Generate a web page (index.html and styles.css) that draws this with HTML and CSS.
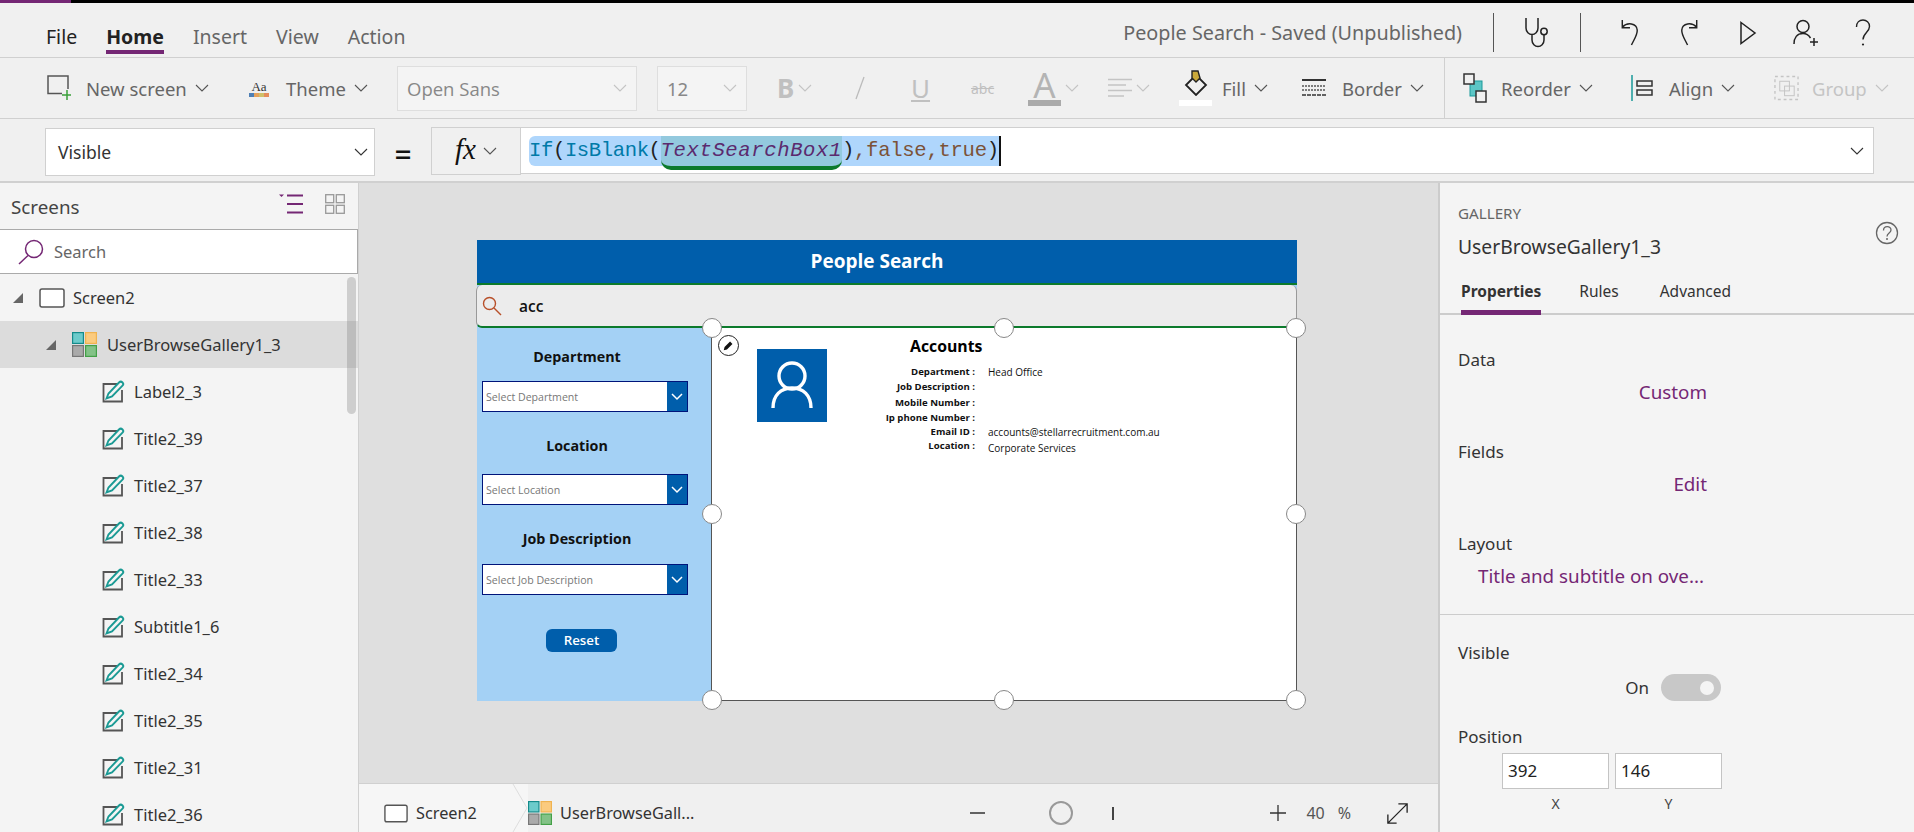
FILE: index.html
```html
<!DOCTYPE html>
<html lang="en">
<head>
<meta charset="utf-8">
<title>People Search</title>
<link rel="stylesheet" href="styles.css">
</head>
<body>
<svg class="defs" aria-hidden="true">
  <symbol id="caret" viewBox="0 0 14 8"><path d="M1 1l6 6 6-6" fill="none" stroke="currentColor" stroke-width="1.1"/></symbol>
  <symbol id="pencilbox" viewBox="0 0 23 23">
    <path d="M15 4H1.500v17.500H20V10" fill="none" stroke="#555" stroke-width="1.800"/>
    <path d="M4.500 18.500l2-5L17 2.500c1-1 2.500-1 3.500 0s1 2.200 0 3.200L10 16.500z" fill="#f4f4f4" stroke="#1a9a94" stroke-width="1.900"/>
  </symbol>
  <symbol id="gallery" viewBox="0 0 25 25">
    <rect x=".6" y=".6" width="10.800" height="10.800" fill="#6ccbcb" stroke="#148b8b" stroke-width="1.200"/>
    <rect x="13.600" y=".6" width="10.800" height="10.800" fill="#fbcb7f" stroke="#f0b350" stroke-width="1.200"/>
    <rect x=".6" y="13.600" width="10.800" height="10.800" fill="#aaa" stroke="#777" stroke-width="1.200"/>
    <rect x="13.600" y="13.600" width="10.800" height="10.800" fill="#83c287" stroke="#43a047" stroke-width="1.200"/>
  </symbol>
  <symbol id="screenbox" viewBox="0 0 26 20"><rect x="1" y="1" width="24" height="18" rx="2" fill="#fff" stroke="#555" stroke-width="1.500"/></symbol>
  <symbol id="tri" viewBox="0 0 10 10"><path d="M10 0v10H0z" fill="#666"/></symbol>
  <symbol id="ddchev" viewBox="0 0 12 8"><path d="M1 1l5 5 5-5" fill="none" stroke="#fff" stroke-width="1.500"/></symbol>
</svg>

<div class="topstrip"><div class="topstrip-accent"></div></div>

<header class="menubar">
  <nav class="menutabs">
    <span class="menutab menutab-file">File</span>
    <span class="menutab menutab-active">Home</span>
    <span class="menutab">Insert</span>
    <span class="menutab">View</span>
    <span class="menutab">Action</span>
  </nav>
  <div class="appstatus">
    <span class="apptitle">People Search - Saved (Unpublished)</span>
    <span class="vsep vsep-a"></span>
    <svg class="ico steth" viewBox="0 0 26 30"><path d="M2 0v10c0 4 3 6.500 6 6.500s6-2.500 6-6.500V0M8 16.500V22c0 4 3 6.500 6 6.500s6-2.500 6-6.500v-5" fill="none" stroke="#222" stroke-width="1.500"/><circle cx="20" cy="13.500" r="3.200" fill="none" stroke="#222" stroke-width="1.500"/></svg>
    <span class="vsep vsep-b"></span>
    <svg class="ico undo" viewBox="0 0 20 28"><path d="M2 1v8h8M2 8.500C7 3 17 4 17.500 11.500c.3 5-3.500 10-6 15.500" fill="none" stroke="#222" stroke-width="1.500"/></svg>
    <svg class="ico redo" viewBox="0 0 20 28"><path d="M18 1v8h-8M18 8.500C13 3 3 4 2.500 11.500c-.3 5 3.500 10 6 15.500" fill="none" stroke="#222" stroke-width="1.500"/></svg>
    <svg class="ico play" viewBox="0 0 18 24"><path d="M2 1.500L16 12 2 22.500z" fill="none" stroke="#222" stroke-width="1.500"/></svg>
    <svg class="ico padd" viewBox="0 0 26 28"><circle cx="10" cy="7.500" r="6" fill="none" stroke="#222" stroke-width="1.500"/><path d="M1 25c0-6 3-10.500 9-10.500 3.500 0 6 2 7.500 4.500M21 19v8M17 23h8" fill="none" stroke="#222" stroke-width="1.500"/></svg>
    <svg class="ico help" viewBox="0 0 16 28"><path d="M1.500 8C1.500 3.500 4.500 1 8 1s6.500 2.500 6.500 6.500c0 5.500-6.500 6.500-6.500 13" fill="none" stroke="#222" stroke-width="1.400"/><circle cx="8" cy="25.500" r="1.100" fill="#222"/></svg>
  </div>
</header>

<section class="toolbar">
  <div class="tool t-new">
    <svg class="ico ico-new" viewBox="0 0 24 26"><path d="M15 18.500H1V1h20v13" fill="none" stroke="#555" stroke-width="1.500"/><path d="M20 15v10M15 20h10" stroke="#3aa03a" stroke-width="1.500"/></svg>
    <span>New screen</span><svg class="caret"><use href="#caret"/></svg>
  </div>
  <div class="tool t-theme">
    <span class="themeicon"><span class="themeaa">Aa</span><span class="themebar"></span></span>
    <span>Theme</span><svg class="caret"><use href="#caret"/></svg>
  </div>
  <div class="selectbox sb-font"><span>Open Sans</span><svg class="caret caret-pale"><use href="#caret"/></svg></div>
  <div class="selectbox sb-size"><span>12</span><svg class="caret caret-pale"><use href="#caret"/></svg></div>
  <div class="fmt f-b"><b>B</b><svg class="caret caret-pale"><use href="#caret"/></svg></div>
  <div class="fmt f-i"><svg class="ico" viewBox="0 0 12 24" width="12" height="24"><path d="M10 1L2 23" stroke="#bbb" stroke-width="1.300"/></svg></div>
  <div class="fmt f-u"><u>U</u></div>
  <div class="fmt f-s"><s>abc</s></div>
  <div class="fmt f-a"><span class="colorA">A<span class="swatch swatch-grey"></span></span><svg class="caret caret-pale"><use href="#caret"/></svg></div>
  <div class="fmt f-al">
    <svg class="ico" viewBox="0 0 24 20" width="24" height="20"><path d="M0 1.500h24M0 7h18M0 12.500h24M0 18h16" stroke="#c4c4c4" stroke-width="1.400"/></svg>
    <svg class="caret caret-pale"><use href="#caret"/></svg>
  </div>
  <div class="tool t-fill">
    <span class="fillicon">
      <svg class="ico" viewBox="0 0 24 26" width="24" height="26"><path d="M12 5L2 15l10 10 10-10z" fill="#f0f0f0" stroke="#222" stroke-width="1.800"/><path d="M8 1h6l2 7-4 4-4-4z" fill="#caa93a" stroke="#222" stroke-width="1.400"/></svg>
      <span class="swatch swatch-white"></span>
    </span>
    <span>Fill</span><svg class="caret"><use href="#caret"/></svg>
  </div>
  <div class="tool t-border">
    <svg class="ico ico-bd" viewBox="0 0 24 18"><path d="M0 1h24" stroke="#333" stroke-width="2"/><path d="M0 7h24M0 11h24" stroke="#555" stroke-width="1.500" stroke-dasharray="2 1"/><path d="M0 16h24" stroke="#333" stroke-width="1.500" stroke-dasharray="4 1"/></svg>
    <span>Border</span><svg class="caret"><use href="#caret"/></svg>
  </div>
  <span class="toolsep"></span>
  <div class="tool t-reorder">
    <svg class="ico ico-ro" viewBox="0 0 24 30"><rect x="7" y="8" width="12" height="15" fill="#5cc6c6" stroke="#1a9a9a"/><rect x="1" y="1" width="10" height="10" fill="#f0f0f0" stroke="#333" stroke-width="1.500"/><rect x="13" y="18" width="10" height="11" fill="#f0f0f0" stroke="#333" stroke-width="1.500"/></svg>
    <span>Reorder</span><svg class="caret"><use href="#caret"/></svg>
  </div>
  <div class="tool t-align">
    <svg class="ico ico-al" viewBox="0 0 24 26"><path d="M1 0v26" stroke="#1a9a9a" stroke-width="1.500"/><rect x="6" y="6" width="15" height="5" fill="none" stroke="#333" stroke-width="1.500"/><rect x="6" y="15" width="15" height="5" fill="none" stroke="#333" stroke-width="1.500"/></svg>
    <span>Align</span><svg class="caret"><use href="#caret"/></svg>
  </div>
  <div class="tool t-group is-off">
    <svg class="ico ico-gr" viewBox="0 0 26 26"><rect x="1" y="1" width="24" height="24" fill="none" stroke="#c4c4c4" stroke-width="1.400" stroke-dasharray="3 3"/><rect x="6" y="6" width="10" height="10" fill="none" stroke="#c4c4c4"/><rect x="11" y="11" width="10" height="10" fill="none" stroke="#c4c4c4"/></svg>
    <span>Group</span><svg class="caret caret-pale"><use href="#caret"/></svg>
  </div>
</section>

<section class="formulabar">
  <div class="propselect"><span>Visible</span><svg class="caret caret-dark"><use href="#caret"/></svg></div>
  <span class="equals">=</span>
  <div class="fxbox"><i class="fx">fx</i><svg class="caret"><use href="#caret"/></svg></div>
  <div class="formula">
    <code class="sel"><span class="tk-head"><span class="tk-fn">If</span><span class="tk-p">(</span><span class="tk-fn">IsBlank</span><span class="tk-p">(</span></span><span class="tk-ref">TextSearchBox1</span><span class="tk-tail"><span class="tk-p">)</span><span class="tk-lit">,false,true</span><span class="tk-p">)</span></span></code>
    <svg class="caret caret-dark formula-caret"><use href="#caret"/></svg>
  </div>
</section>

<main class="workspace">
  <aside class="tree">
    <div class="treehead">
      <span class="treetitle">Screens</span>
      <svg class="ico ico-list" viewBox="0 0 24 20"><path d="M0 .500h5L2.500 3z" fill="#742774"/><path d="M8 1.500h16M8 10h16M8 18.500h16" stroke="#742774" stroke-width="1.800"/></svg>
      <svg class="ico ico-grid" viewBox="0 0 20 20"><g fill="none" stroke="#999" stroke-width="1.300"><rect x=".7" y=".7" width="8" height="8"/><rect x="11.300" y=".7" width="8" height="8"/><rect x=".7" y="11.300" width="8" height="8"/><rect x="11.300" y="11.300" width="8" height="8"/></g></svg>
    </div>
    <div class="treesearch">
      <svg class="ico ico-search" viewBox="0 0 26 26"><circle cx="16" cy="10" r="8.500" fill="none" stroke="#742774" stroke-width="1.500"/><path d="M10 16.500L1 25" stroke="#742774" stroke-width="1.500"/></svg>
      <span>Search</span>
    </div>
    <div class="treelist">
      <div class="row row-l0"><svg class="tri"><use href="#tri"/></svg><svg class="ico ico-screen"><use href="#screenbox"/></svg><span>Screen2</span></div>
      <div class="row row-l1 row-sel"><svg class="tri"><use href="#tri"/></svg><svg class="ico ico-gal"><use href="#gallery"/></svg><span>UserBrowseGallery1_3</span></div>
      <div class="row row-l2"><svg class="ico ico-pen"><use href="#pencilbox"/></svg><span>Label2_3</span></div>
      <div class="row row-l2"><svg class="ico ico-pen"><use href="#pencilbox"/></svg><span>Title2_39</span></div>
      <div class="row row-l2"><svg class="ico ico-pen"><use href="#pencilbox"/></svg><span>Title2_37</span></div>
      <div class="row row-l2"><svg class="ico ico-pen"><use href="#pencilbox"/></svg><span>Title2_38</span></div>
      <div class="row row-l2"><svg class="ico ico-pen"><use href="#pencilbox"/></svg><span>Title2_33</span></div>
      <div class="row row-l2"><svg class="ico ico-pen"><use href="#pencilbox"/></svg><span>Subtitle1_6</span></div>
      <div class="row row-l2"><svg class="ico ico-pen"><use href="#pencilbox"/></svg><span>Title2_34</span></div>
      <div class="row row-l2"><svg class="ico ico-pen"><use href="#pencilbox"/></svg><span>Title2_35</span></div>
      <div class="row row-l2"><svg class="ico ico-pen"><use href="#pencilbox"/></svg><span>Title2_31</span></div>
      <div class="row row-l2"><svg class="ico ico-pen"><use href="#pencilbox"/></svg><span>Title2_36</span></div>
      <div class="treescroll"></div>
    </div>
  </aside>

  <div class="center">
    <div class="stage">
      <div class="app">
        <div class="app-header">People Search</div>
        <div class="app-search">
          <svg class="ico ico-appsearch" viewBox="0 0 20 20"><circle cx="7.500" cy="7.500" r="6" fill="none" stroke="#b8502a" stroke-width="1.400"/><path d="M12 12l7 7" stroke="#b8502a" stroke-width="1.400"/></svg>
          <span>acc</span>
        </div>
        <div class="app-body">
          <div class="filters">
            <div class="flabel">Department</div>
            <div class="dd dd-1"><span>Select Department</span><i class="ddbtn"><svg><use href="#ddchev"/></svg></i></div>
            <div class="flabel">Location</div>
            <div class="dd dd-2"><span>Select Location</span><i class="ddbtn"><svg><use href="#ddchev"/></svg></i></div>
            <div class="flabel">Job Description</div>
            <div class="dd dd-3"><span>Select Job Description</span><i class="ddbtn"><svg><use href="#ddchev"/></svg></i></div>
            <div class="resetbtn">Reset</div>
          </div>
          <div class="results">
            <div class="avatar"><svg viewBox="0 0 70 73"><circle cx="35" cy="27" r="13" fill="none" stroke="#fff" stroke-width="3.400"/><path d="M16 59c0-13 8-20 19-20s19 7 19 20" fill="none" stroke="#fff" stroke-width="3.400"/></svg></div>
            <div class="person">
              <div class="personname">Accounts</div>
              <dl class="facts">
                <dt>Department :</dt><dd>Head Office</dd>
                <dt>Job Description :</dt><dd></dd>
                <dt>Mobile Number :</dt><dd></dd>
                <dt>Ip phone Number :</dt><dd></dd>
                <dt>Email ID :</dt><dd>accounts@stellarrecruitment.com.au</dd>
                <dt>Location :</dt><dd>Corporate Services</dd>
              </dl>
            </div>
            <span class="editbadge"><svg viewBox="0 0 14 14"><path d="M1 13l1-4 7-7 3 3-7 7z" fill="#111"/></svg></span>
            <span class="handle h-tl"></span><span class="handle h-tc"></span><span class="handle h-tr"></span>
            <span class="handle h-ml"></span><span class="handle h-mr"></span>
            <span class="handle h-bl"></span><span class="handle h-bc"></span><span class="handle h-br"></span>
          </div>
        </div>
      </div>
    </div>
    <footer class="statusbar">
      <div class="crumb crumb-a"><svg class="ico ico-crumbscreen"><use href="#screenbox"/></svg><span>Screen2</span><svg class="crumbarrow" viewBox="0 0 16 48"><path d="M1 0l14 24L1 48" fill="none" stroke="#ddd"/></svg></div>
      <div class="crumb crumb-b"><svg class="ico ico-gal"><use href="#gallery"/></svg><span>UserBrowseGall...</span></div>
      <div class="zoomctl">
        <svg class="zm-minus" viewBox="0 0 15 2"><path d="M0 1h15" stroke="#333" stroke-width="1.500"/></svg>
        <span class="zm-thumb"></span>
        <span class="zm-tick"></span>
        <svg class="zm-plus" viewBox="0 0 16 16"><path d="M0 8h16M8 0v16" stroke="#333" stroke-width="1.300"/></svg>
        <span class="zm-val">40</span><span class="zm-pct">%</span>
        <svg class="zm-expand" viewBox="0 0 24 24"><path d="M1 23L23 1M13 1h10v10M1 13v10h10" fill="none" stroke="#222" stroke-width="1.500"/></svg>
      </div>
    </footer>
  </div>

  <aside class="props">
    <div class="propshead">
      <div class="propskind">GALLERY</div>
      <div class="propsname">UserBrowseGallery1_3</div>
      <svg class="ico ico-help" viewBox="0 0 24 24"><circle cx="12" cy="12" r="10.500" fill="none" stroke="#666" stroke-width="1.300"/><path d="M8.500 9.500c0-5 7.500-5 7.500-.5 0 3-4 3-4 6.500" fill="none" stroke="#666" stroke-width="1.300"/><circle cx="12" cy="18" r="1" fill="#666"/></svg>
    </div>
    <div class="propstabs">
      <span class="ptab ptab-active">Properties</span>
      <span class="ptab ptab-rules">Rules</span>
      <span class="ptab ptab-adv">Advanced</span>
    </div>
    <div class="propsec propsec-a">
      <div class="plabel">Data</div>
      <div class="pvalue">Custom</div>
      <div class="plabel">Fields</div>
      <div class="pvalue">Edit</div>
      <div class="plabel">Layout</div>
      <div class="pvalue pvalue-trunc">Title and subtitle on ove...</div>
    </div>
    <div class="propsec propsec-b">
      <div class="plabel">Visible</div>
      <div class="toggleline"><span>On</span><span class="toggle"><i class="knob"></i></span></div>
      <div class="plabel plabel-pos">Position</div>
      <div class="xyinputs">
        <div class="xy"><div class="xybox">392</div><div class="xycap">X</div></div>
        <div class="xy"><div class="xybox">146</div><div class="xycap">Y</div></div>
      </div>
    </div>
  </aside>
</main>
</body>
</html>
```
FILE: styles.css
```css
* { box-sizing: border-box; }
html, body { margin: 0; height: 100%; }
body {
  width: 1914px; height: 832px; overflow: hidden;
  display: flex; flex-direction: column;
  background: #f0f0f0; color: #333;
  font-family: "Noto Sans", "Open Sans", sans-serif; font-size: 17px;
}
.defs { position: absolute; width: 0; height: 0; }
.ico { display: block; flex: none; }
.caret { width: 14px; height: 8px; flex: none; color: #555; display: block; }
.caret-pale { color: #c4c4c4; }
.caret-dark { color: #333; }

.topstrip { height: 3px; background: #000; flex: none; }
.topstrip-accent { width: 71px; height: 3px; background: #742774; }

/* menu bar */
.menubar { height: 55px; flex: none; display: flex; border-bottom: 1px solid #d0d0d0; position: relative; }
.menutabs { display: flex; padding-left: 46px; height: 100%; }
.menutab { height: 51px; padding-top: 20px; line-height: 28px; margin-right: 29px; color: #666; font-size: 19.500px; }
.menutab-file { color: #222; }
.menutab-active { color: #222; font-weight: 700; border-bottom: 4px solid #742774; }
.appstatus { margin-left: auto; display: flex; align-items: center; height: 47px; margin-top: 6px; padding-right: 43px; }
.apptitle { color: #666; font-size: 19.800px; margin-right: 31px; white-space: nowrap; }
.vsep { width: 1px; height: 39px; background: #555; }
.steth { width: 26px; height: 30px; margin-left: 30px; margin-right: 30px; }
.undo, .redo { width: 20px; height: 27px; }
.undo { margin-left: 39px; }
.redo { margin-left: 39px; }
.play { width: 18px; height: 24px; margin-left: 40px; }
.padd { width: 26px; height: 28px; margin-left: 36px; }
.help { width: 16px; height: 28px; margin-left: 36px; }

/* toolbar */
.toolbar { height: 61px; flex: none; display: flex; align-items: center; padding-left: 47px; border-bottom: 1px solid #d0d0d0; font-size: 18.500px; color: #666; }
.tool { display: flex; align-items: center; height: 100%; flex: none; }
.tool .caret { margin-left: 8px; }
.t-new { width: 201px; }
.ico-new { width: 24px; height: 26px; margin-right: 15px; }
.t-theme { width: 149px; }
.themeicon { width: 22px; margin-right: 16px; display: flex; flex-direction: column; align-items: center; }
.themeaa { font-family: "Liberation Serif", serif; font-size: 13px; line-height: 13px; color: #333; }
.themebar { width: 20px; height: 4px; background: linear-gradient(90deg, #4f7fb5 0 25%, #e5a15c 25% 50%, #d0c06a 50% 75%, #e58c5c 75%); }
.selectbox { height: 45px; border: 1px solid #dedede; background: #f4f4f4; display: flex; align-items: center; justify-content: space-between; padding: 0 9px; color: #888; flex: none; }
.sb-font { width: 240px; font-family: "Open Sans", sans-serif; font-size: 18.500px; }
.sb-size { width: 90px; margin-left: 20px; font-size: 18.500px; }
.fmt { flex: none; display: flex; align-items: center; height: 100%; color: #c0c0c0; }
.fmt .caret { margin-left: 4px; }
.f-b { margin-left: 30px; width: 65px; font-size: 26px; }
.f-i { width: 60px; padding-left: 12px; }
.f-u { width: 60px; font-size: 26px; padding-left: 9px; }
.f-s { width: 66px; font-size: 14px; padding-left: 9px; }
.f-a { width: 80px; position: relative; }
.colorA { font-size: 35px; line-height: 30px; font-weight: 400; width: 33px; text-align: center; position: relative; height: 36px; color: #b4b4b4; }
.swatch { position: absolute; width: 33px; height: 6px; left: 0; bottom: 0; }
.swatch-grey { background: #aaa; }
.swatch-white { background: #fff; }
.f-al { width: 71px; }
.t-fill { width: 123px; }
.fillicon { width: 33px; height: 36px; position: relative; margin-right: 10px; display: flex; justify-content: center; }
.t-border { width: 142px; }
.ico-bd { width: 24px; height: 18px; margin-right: 16px; }
.toolsep { width: 1px; height: 100%; background: #d0d0d0; flex: none; }
.t-reorder { width: 186px; padding-left: 18px; }
.ico-ro { width: 24px; height: 30px; margin-right: 14px; }
.t-align { width: 143px; }
.ico-al { width: 24px; height: 26px; margin-right: 14px; }
.t-group { width: 140px; }
.ico-gr { width: 25px; height: 26px; margin-right: 13px; }
.is-off { color: #c4c4c4; }

/* formula */
.formulabar { height: 64px; flex: none; display: flex; align-items: flex-start; padding: 8px 40px 0 45px; border-bottom: 2px solid #d0d0d0; }
.propselect { width: 330px; height: 48px; background: #fff; border: 1px solid #d0d0d0; display: flex; align-items: center; justify-content: space-between; padding: 0 6px 0 12px; color: #333; font-size: 17.500px; margin-top: 1px; }
.equals { width: 56px; text-align: center; font-size: 30px; line-height: 56px; color: #111; font-weight: 500; }
.fxbox { width: 90px; height: 48px; border: 1px solid #d0d0d0; background: #f0f0f0; display: flex; align-items: center; justify-content: center; gap: 7px; }
.fx { font-family: "Liberation Serif", serif; font-size: 29px; color: #111; margin-top: -4px; }
.formula { flex: 1; height: 47px; background: #fff; border: 1px solid #d0d0d0; border-left: 0; display: flex; align-items: center; justify-content: space-between; padding: 0 8px 0 8px; }
.formula-caret { margin-right: 1px; }
.sel { display: block; font-family: "Liberation Mono", monospace; font-size: 20.600px; line-height: 30px; height: 30px; background: #afd6fc; border-radius: 6px 0 0 6px; border-right: 2px solid #111; white-space: pre; }
.tk-head { letter-spacing: -.4px; }
.tk-tail { letter-spacing: -.3px; }
.tk-fn { color: #007aa8; }
.tk-p { color: #222; }
.tk-ref { color: #5b2a6e; font-style: italic; background: #93c9de; display: inline-block; height: 34px; letter-spacing: .6px; border-bottom: 4px solid #0c7a2c; border-radius: 0 0 10px 10px; vertical-align: top; }
.tk-lit { color: #7b5238; }

/* workspace */
.workspace { flex: 1; min-height: 0; display: flex; }
.tree { width: 359px; flex: none; background: #f4f4f4; border-right: 1px solid #d0d0d0; display: flex; flex-direction: column; }
.treehead { height: 46px; flex: none; display: flex; align-items: center; padding: 2px 13px 0 11px; }
.treetitle { font-size: 18.800px; color: #444; flex: 1; }
.ico-list { width: 24px; height: 20px; margin-top: -7px; margin-right: 22px; }
.ico-grid { width: 20px; height: 20px; margin-top: -7px; }
.treesearch { height: 45px; flex: none; background: #fff; border-top: 1px solid #aaa; border-bottom: 1px solid #aaa; border-right: 1px solid #aaa; display: flex; align-items: center; padding-left: 18px; color: #666; font-size: 16.500px; }
.ico-search { width: 26px; height: 26px; margin-right: 10px; }
.treelist { flex: 1; min-height: 0; position: relative; overflow: hidden; }
.row { height: 47px; display: flex; align-items: center; color: #333; font-size: 16.500px; white-space: nowrap; }
.tri { width: 10px; height: 10px; flex: none; }
.row-l0 { padding-left: 13px; }
.row-l0 .tri { margin-right: 16px; }
.ico-screen { width: 26px; height: 20px; margin-right: 8px; }
.row-l1 { padding-left: 46px; }
.row-l1 .tri { margin-right: 16px; }
.row-sel { background: #dcdcdc; }
.ico-gal { width: 25px; height: 25px; margin-right: 10px; }
.row-l2 { padding-left: 102px; }
.ico-pen { width: 23px; height: 23px; margin-right: 9px; }
.treescroll { position: absolute; left: 347px; top: 3px; width: 9px; height: 137px; border-radius: 5px; background: rgba(120, 120, 120, .3); }

/* canvas */
.center { flex: 1; min-width: 0; display: flex; flex-direction: column; background: #dfdfdf; }
.stage { flex: 1; min-height: 0; padding: 57px 0 0 118px; }
.app { width: 820px; height: 461px; display: flex; flex-direction: column; font-family: "Open Sans", sans-serif; background: #a4d1f5; }
.app-header { height: 45px; flex: none; background: #005eab; border-bottom: 2px solid #0c7a2c; color: #fff; font-weight: 700; font-size: 19px; line-height: 43px; text-align: center; padding-right: 20px; }
.app-search { height: 43px; flex: none; background: #ececec; border: 1px solid #999; border-top: 0; border-bottom: 2px solid #0c7a2c; border-radius: 6px; margin-left: -1px; display: flex; align-items: center; padding-left: 5px; font-weight: 600; font-size: 15.500px; color: #111; }
.ico-appsearch { width: 20px; height: 20px; margin-right: 17px; }
.app-body { flex: 1; min-height: 0; display: flex; }
.filters { width: 234px; flex: none; padding: 17px 0 0 5px; }
.flabel { width: 190px; height: 24px; text-align: center; font-weight: 700; font-size: 14.300px; line-height: 24px; color: #111; }
.dd { width: 206px; height: 31px; background: #fff; border: 1px solid #00147a; display: flex; align-items: center; justify-content: space-between; font-size: 10.600px; color: #777; padding-left: 3px; margin-bottom: 22px; }
.dd-1 { margin-top: 12px; }
.dd-2 { margin-top: 16px; }
.dd-3 { margin-top: 13px; margin-bottom: 0; }
.ddbtn { width: 20px; height: 100%; background: #005eab; display: flex; align-items: center; justify-content: center; }
.ddbtn svg { width: 12px; height: 8px; }
.resetbtn { width: 71px; height: 23px; margin: 34px 0 0 64px; border-radius: 6px; background: #005eab; color: #fff; font-size: 13.300px; font-weight: 600; text-align: center; line-height: 23px; }
.results { flex: 1; min-width: 0; position: relative; background: #fff; border-left: 1px solid #555; border-right: 1px solid #555; border-bottom: 1px solid #555; display: flex; align-items: flex-start; padding-left: 45px; }
.avatar { width: 70px; height: 73px; margin-top: 21px; background: #005eab; flex: none; }
.avatar svg { display: block; width: 100%; height: 100%; }
.person { padding: 6px 0 0 3px; color: #111; }
.personname { height: 24px; line-height: 24px; padding-left: 80px; font-weight: 700; font-size: 15.800px; color: #000; }
.facts { margin: 7px 0 0; display: grid; grid-template-columns: 145px auto; column-gap: 13px; grid-template-rows: 15px 16px 15px 14px 14px 14px; font-size: 9.600px; line-height: 14px; }
.facts dt { font-weight: 700; text-align: right; white-space: nowrap; }
.facts dd { margin: 0; white-space: nowrap; font-size: 10px; }
.facts dd:last-child { padding-top: 2px; }
.editbadge { position: absolute; left: 6px; top: 7px; width: 21px; height: 21px; border-radius: 50%; border: 1.500px solid #222; background: #fff; display: flex; align-items: center; justify-content: center; }
.editbadge svg { width: 11px; height: 11px; }
.handle { position: absolute; width: 20px; height: 20px; border-radius: 50%; background: #fff; border: 1px solid #888; transform: translate(-50%, -50%); }
.h-tl, .h-tc, .h-tr { top: 0; }
.h-ml, .h-mr { top: 50%; }
.h-bl, .h-bc, .h-br { top: 100%; }
.h-tl, .h-ml, .h-bl { left: 0; }
.h-tc, .h-bc { left: 50%; }
.h-tr, .h-mr, .h-br { left: 100%; }

/* status bar */
.statusbar { height: 49px; flex: none; background: #f0f0f0; border-top: 1px solid #d0d0d0; display: flex; align-items: stretch; font-size: 16.300px; color: #333; }
.crumb { display: flex; align-items: center; flex: none; padding-top: 10px; }
.crumb-a { width: 169px; padding-left: 25px; background: #f6f6f6; position: relative; }
.ico-crumbscreen { width: 24px; height: 19px; margin-right: 8px; }
.crumbarrow { position: absolute; right: 0; top: 0; width: 16px; height: 48px; }
.crumb-b .ico-gal { width: 24px; height: 24px; margin-right: 8px; }
.zoomctl { display: flex; align-items: center; margin-left: 276px; padding-top: 10px; color: #555; }
.zm-minus { width: 15px; height: 2px; }
.zm-thumb { width: 24px; height: 24px; border: 2px solid #999; border-radius: 50%; margin-left: 64px; }
.zm-tick { width: 2px; height: 13px; background: #444; margin-left: 39px; }
.zm-plus { width: 16px; height: 16px; margin-left: 156px; }
.zm-val { margin-left: 20px; font-size: 16px; }
.zm-pct { margin-left: 13px; font-size: 16px; }
.zm-expand { width: 21px; height: 21px; margin-left: 36px; }

/* properties panel */
.props { width: 476px; flex: none; background: #f4f4f4; border-left: 2px solid #ccc; display: flex; flex-direction: column; color: #333; font-size: 17px; }
.propshead { height: 87px; padding: 19px 0 0 18px; position: relative; flex: none; }
.propskind { font-size: 15.200px; line-height: 22px; color: #666; }
.propsname { font-size: 19.300px; line-height: 28px; margin-top: 9px; color: #333; }
.ico-help { position: absolute; right: 15px; top: 38px; width: 24px; height: 24px; }
.propstabs { height: 45px; flex: none; border-bottom: 2px solid #ccc; display: flex; padding-left: 21px; font-size: 15.500px; }
.ptab { height: 45px; line-height: 43px; flex: none; }
.ptab-active { font-weight: 700; border-bottom: 5px solid #742774; }
.ptab-rules { margin-left: 38px; }
.ptab-adv { margin-left: 41px; }
.propsec { padding-left: 18px; flex: none; }
.propsec-a { height: 300px; padding-top: 33px; border-bottom: 1px solid #ccc; }
.plabel { line-height: 24px; height: 24px; }
.pvalue { width: 249px; height: 24px; line-height: 24px; margin: 8px 0 36px; text-align: right; color: #742774; font-size: 18.800px; }
.pvalue-trunc { width: 246px; margin-bottom: 0; white-space: nowrap; }
.propsec-b { padding-top: 26px; }
.toggleline { width: 263px; height: 27px; margin-top: 9px; display: flex; justify-content: flex-end; align-items: center; gap: 12px; }
.toggle { width: 60px; height: 27px; border-radius: 14px; background: #c8c8c8; position: relative; display: flex; align-items: center; justify-content: flex-end; padding-right: 7px; }
.knob { width: 14px; height: 14px; background: #f4f4f4; border-radius: 50%; }
.plabel-pos { margin-top: 24px; }
.xyinputs { display: flex; gap: 6px; margin: 4px 0 0 44px; }
.xy { width: 107px; }
.xybox { height: 36px; background: #fff; border: 1px solid #c4c4c4; padding-left: 5px; line-height: 34px; color: #222; font-size: 17px; }
.xycap { text-align: center; font-size: 14px; line-height: 20px; margin-top: 5px; color: #444; }
```
